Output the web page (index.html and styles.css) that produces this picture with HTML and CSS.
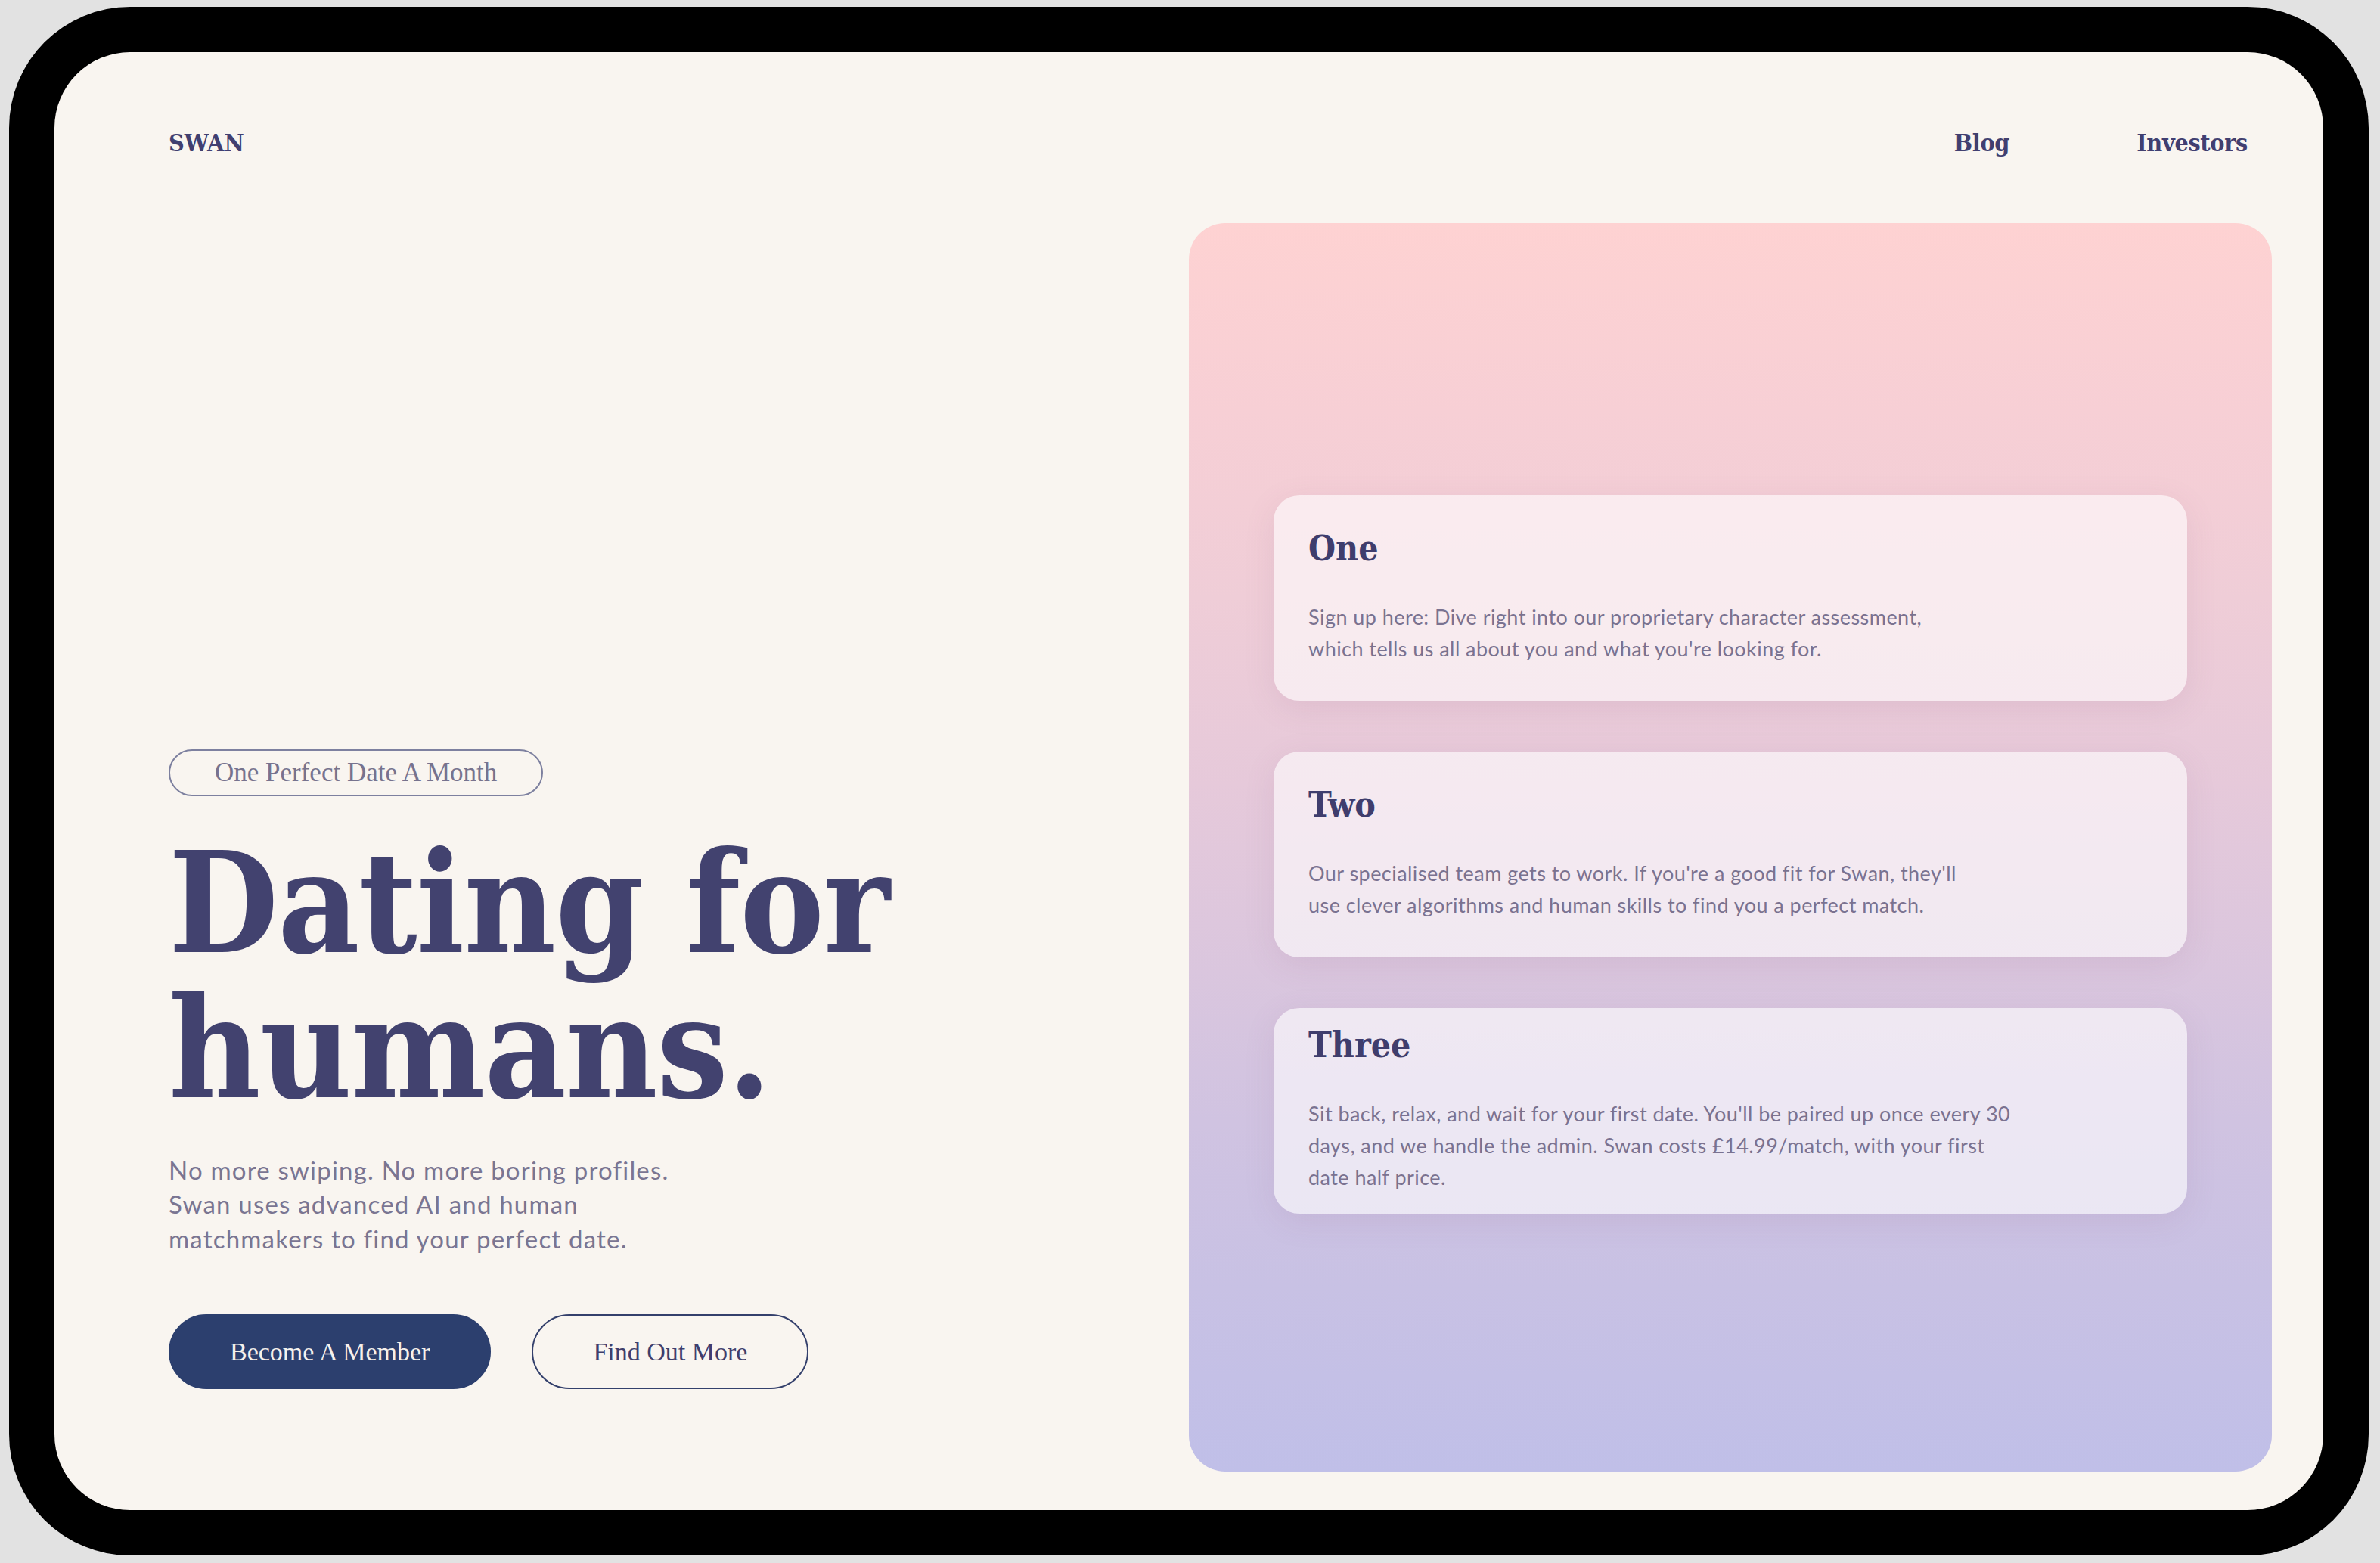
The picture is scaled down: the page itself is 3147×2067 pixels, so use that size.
FILE: index.html
```html
<!DOCTYPE html>
<html lang="en">
<head>
<meta charset="utf-8">
<title>Swan — Dating for humans.</title>
<link rel="stylesheet" href="styles.css">
</head>
<body>
<div class="frame">
  <div class="screen">
    <header class="topbar">
      <a class="logo" href="#">SWAN</a>
      <nav class="nav">
        <a href="#">Blog</a>
        <a href="#">Investors</a>
      </nav>
    </header>
    <main class="hero">
      <section class="intro">
        <span class="pill">One Perfect Date A Month</span>
        <h1 class="headline">Dating for<br>humans.</h1>
        <p class="lede">No more swiping. No more boring profiles.<br>Swan uses advanced AI and human<br>matchmakers to find your perfect date.</p>
        <div class="actions">
          <a class="btn btn-solid" href="#">Become A Member</a>
          <a class="btn btn-outline" href="#">Find Out More</a>
        </div>
      </section>
      <section class="steps">
        <article class="step">
          <h2 class="step-title">One</h2>
          <p class="step-text"><a href="#" class="step-link">Sign up here:</a> Dive right into our proprietary character assessment,<br>which tells us all about you and what you're looking for.</p>
        </article>
        <article class="step">
          <h2 class="step-title">Two</h2>
          <p class="step-text">Our specialised team gets to work. If you're a good fit for Swan, they'll<br>use clever algorithms and human skills to find you a perfect match.</p>
        </article>
        <article class="step">
          <h2 class="step-title">Three</h2>
          <p class="step-text">Sit back, relax, and wait for your first date. You'll be paired up once every 30<br>days, and we handle the admin. Swan costs £14.99/match, with your first<br>date half price.</p>
        </article>
      </section>
    </main>
  </div>
</div>
</body>
</html>
```

FILE: styles.css
```css
* { box-sizing: border-box; }

html, body {
  margin: 0;
  padding: 0;
}

body {
  background: #e2e2e2;
  width: 3147px;
  height: 2067px;
  overflow: hidden;
  padding: 9px 15px 10px 12px;
}

.frame {
  height: 2048px;
  background: #000;
  border-radius: 160px;
  padding: 60px;
}

.screen {
  height: 100%;
  background: #f9f5f0;
  border-radius: 100px;
  padding: 0 68px 51px 151px;
  display: flex;
  flex-direction: column;
}

.topbar {
  display: flex;
  justify-content: space-between;
  align-items: flex-start;
  padding-top: 104px;
  margin-right: 32px;
  height: 136px;
  flex: none;
  font-family: "DejaVu Serif Condensed", "DejaVu Serif", serif;
  font-stretch: condensed;
  font-weight: 700;
  font-size: 32px;
  line-height: 33px;
}

.topbar a {
  color: #413f70;
  text-decoration: none;
}

.nav {
  display: flex;
  gap: 168px;
}

.nav a {
  letter-spacing: -0.3px;
}

.hero {
  flex: 1;
  margin-top: 90px;
  display: grid;
  grid-template-columns: 1fr 1432px;
  min-height: 0;
}

.intro {
  display: flex;
  flex-direction: column;
  justify-content: flex-end;
  align-items: flex-start;
  padding-bottom: 109px;
}

.pill {
  display: inline-flex;
  align-items: center;
  height: 62px;
  padding: 0 59px;
  border: 2px solid #7d809f;
  border-radius: 31px;
  font-family: "Liberation Serif", serif;
  font-size: 35px;
  color: #77738e;
}

.headline {
  margin: 45px 0 0;
  font-family: "DejaVu Serif Condensed", "DejaVu Serif", serif;
  font-stretch: condensed;
  font-weight: 700;
  font-size: 186px;
  line-height: 192px;
  color: #42426f;
  letter-spacing: -1px;
}

.lede {
  margin: 43px 0 0;
  font-family: "Lato", sans-serif;
  font-size: 33px;
  letter-spacing: 1.2px;
  line-height: 45.5px;
  color: #7a7592;
}

.actions {
  display: flex;
  gap: 54px;
  margin-top: 77px;
}

.btn {
  display: inline-flex;
  align-items: center;
  justify-content: center;
  height: 99px;
  padding: 0 79px;
  border-radius: 50px;
  font-family: "Liberation Serif", serif;
  font-size: 34px;
  text-decoration: none;
}

.btn-solid {
  background: #2c3f6e;
  color: #f6f1ec;
  border: 2px solid #2c3f6e;
}

.btn-outline {
  background: transparent;
  color: #3f3e6c;
  border: 2px solid #34406c;
}

.steps {
  border-radius: 48px;
  background: linear-gradient(180deg,
    #fed2d2 0%,
    #f7cfd5 15%,
    #efcdd7 30%,
    #e6c9da 45%,
    #dac6de 60%,
    #d0c3e1 72%,
    #c8c1e4 85%,
    #c0bfe8 100%);
  display: flex;
  flex-direction: column;
  justify-content: center;
  gap: 67px;
  padding: 18px 112px 0;
}

.step {
  height: 272px;
  flex: none;
  border-radius: 34px;
  background: rgba(255, 255, 255, 0.6);
  box-shadow: 0 10px 40px rgba(140, 90, 130, 0.12);
  padding: 0 46px;
  display: flex;
  flex-direction: column;
  justify-content: center;
}

.step-title {
  margin: 0 0 47px;
  font-family: "DejaVu Serif Condensed", "DejaVu Serif", serif;
  font-stretch: condensed;
  font-weight: 700;
  font-size: 46px;
  line-height: 46px;
  color: #3f3d6d;
}

.step-text {
  margin: 0;
  font-family: "Lato", sans-serif;
  font-size: 27px;
  letter-spacing: 0.45px;
  line-height: 42px;
  color: #7a7290;
}

.step-link {
  color: #7a7290;
  text-decoration: underline;
  text-underline-offset: 4px;
  text-decoration-thickness: 1px;
}
```
